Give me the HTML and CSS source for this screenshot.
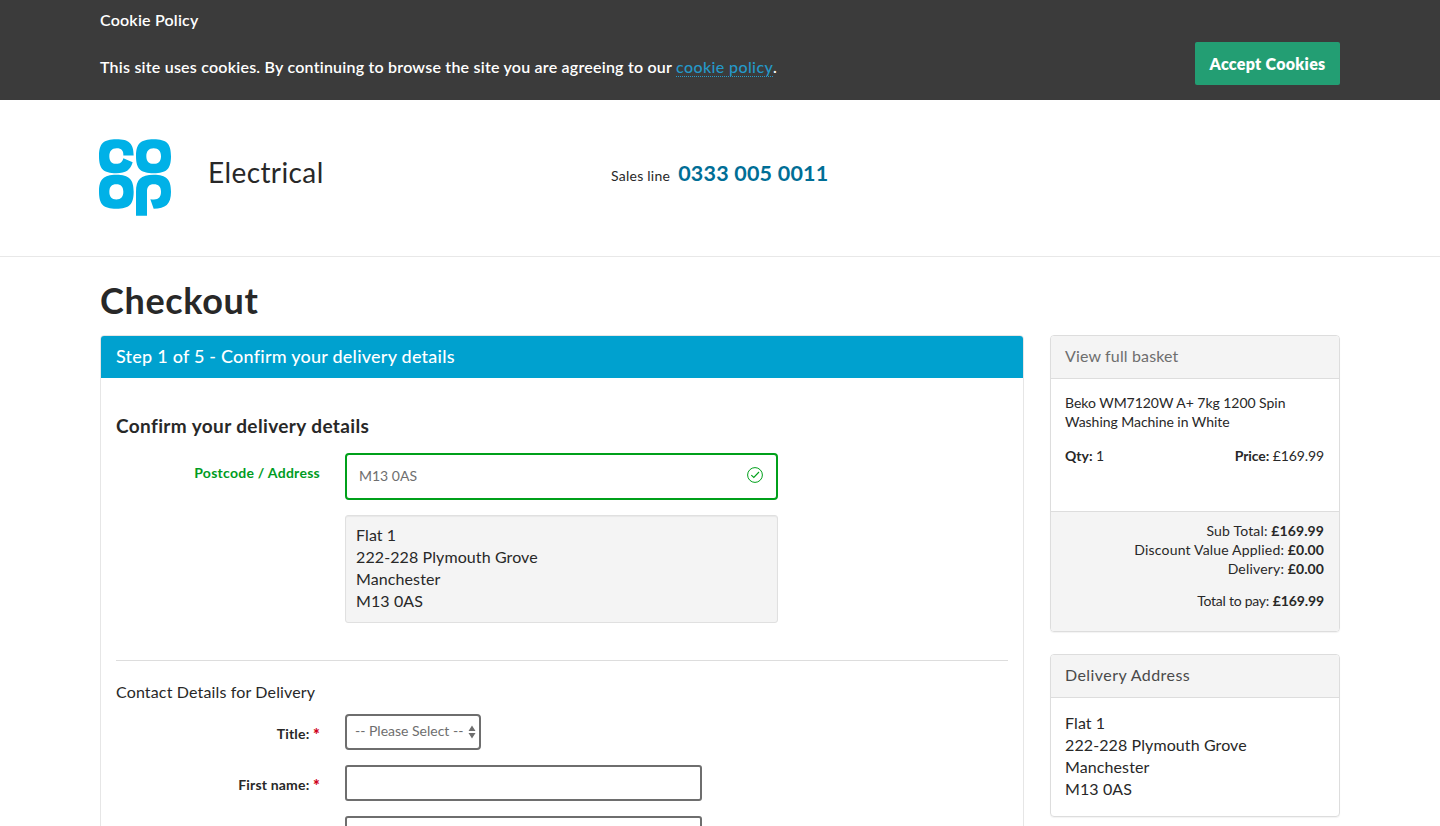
FILE: index.html
```html
<!DOCTYPE html>
<html lang="en">
<head>
<meta charset="utf-8">
<title>Checkout - Co-op Electrical</title>
<link rel="stylesheet" href="styles.css">
</head>
<body>
<section class="cookie-banner">
  <div class="container cookie-inner">
    <div class="cookie-text">
      <p class="cookie-title"><span>Cookie Policy</span></p>
      <p class="cookie-message">This site uses cookies. By continuing to browse the site you are agreeing to our <a href="#">cookie policy</a>.</p>
    </div>
    <button class="accept" type="button">Accept Cookies</button>
  </div>
</section>

<header class="site-header">
  <div class="container header-inner">
    <svg class="logo" viewBox="57 57 216 230" role="img" aria-label="Co-op">
      <g fill="#00b1e7" fill-rule="evenodd">
        <path d="M109 57C148 57 161 70 161 106H130C131 92 125 84 110 84C95 84 88 93 88 108C88 123 95 131 109 131C120 131 127 126 130 114L158 126C151 149 138 159 109 159C70 159 57 146 57 108C57 70 70 57 109 57Z"/>
        <path d="M221 57C260 57 273 70 273 108C273 146 260 159 221 159C182 159 168 146 168 108C168 70 182 57 221 57ZM221 84C206 84 199 93 199 108C199 123 206 131 221 131C236 131 243 123 243 108C243 93 236 84 221 84Z"/>
        <path d="M109 164C148 164 161 178 161 215C161 253 148 266 109 266C70 266 57 253 57 215C57 178 70 164 109 164ZM109 192C95 192 88 200 88 215C88 230 95 238 109 238C123 238 130 230 130 215C130 200 123 192 109 192Z"/>
        <path d="M221 164C260 164 273 178 273 215C273 253 257 265 221 266L211 237C234 242 243 232 243 215C243 200 236 192 221 192C207 192 201 200 201 214V287H168V215C168 178 182 164 221 164Z"/>
      </g>
    </svg>
    <div class="brand">Electrical</div>
    <div class="sales"><span class="sales-label">Sales line</span><span class="sales-number">0333 005 0011</span></div>
  </div>
</header>

<main class="container">
  <h1><span>Checkout</span></h1>
  <div class="columns">
    <section class="panel">
      <h2 class="panel-heading"><span>Step 1 of 5 - Confirm your delivery details</span></h2>
      <form class="panel-body">
        <h3 class="section-title"><span>Confirm your delivery details</span></h3>
        <div class="row postcode-row">
          <label class="label valid"><span>Postcode / Address</span></label>
          <div class="postcode">
            <div class="postcode-input">
              <span class="postcode-value">M13 0AS</span>
              <svg class="tick" viewBox="0 0 16 16" fill="none" stroke="#00a01a"><circle cx="8" cy="8" r="7.4"/><path d="M4.3 8.2L6.8 10.5L12 5" stroke-width="1.1"/></svg>
            </div>
            <address class="well">Flat 1<br><span>222-228 Plymouth Grove</span><br>Manchester<br>M13 0AS</address>
          </div>
        </div>
        <hr>
        <p class="contact-title"><span>Contact Details for Delivery</span></p>
        <div class="row field-row">
          <label class="label"><span>Title: <b class="req">*</b></span></label>
          <div class="select"><span>-- Please Select --</span>
            <svg class="arrows" viewBox="0 0 8 14" fill="#6e6e6e"><path d="M4 0.5L7.5 6H0.5ZM4 13.5L7.5 8H0.5Z"/></svg>
          </div>
        </div>
        <div class="row field-row">
          <label class="label"><span>First name: <b class="req">*</b></span></label>
          <input class="text-input" type="text">
        </div>
        <div class="row field-row">
          <label class="label"></label>
          <input class="text-input" type="text">
        </div>
      </form>
    </section>

    <aside class="sidebar">
      <section class="card">
        <div class="card-heading basket-heading"><span>View full basket</span></div>
        <div class="basket-body">
          <p class="product"><span>Beko WM7120W A+ 7kg 1200 Spin</span><br><span>Washing Machine in White</span></p>
          <div class="qty-row"><span><b>Qty:</b> 1</span><span class="price"><b>Price:</b> £169.99</span></div>
        </div>
        <div class="totals">
          <p><span>Sub Total:</span> <b>£169.99</b></p>
          <p><span>Discount Value Applied:</span> <b>£0.00</b></p>
          <p><span>Delivery:</span> <b>£0.00</b></p>
          <p class="total-pay"><span>Total to pay:</span> <b>£169.99</b></p>
        </div>
      </section>
      <section class="card">
        <div class="card-heading"><span>Delivery Address</span></div>
        <address class="card-address">Flat 1<br><span>222-228 Plymouth Grove</span><br>Manchester<br>M13 0AS</address>
      </section>
    </aside>
  </div>
</main>
</body>
</html>
```
FILE: styles.css
```css
* { box-sizing: border-box; }
html, body { margin: 0; height: 826px; overflow: hidden; }
body {
  background: #fff;
  color: #282828;
  font-family: Lato, "Open Sans", sans-serif;
  font-size: 16px;
  line-height: 22px;
}
h1, h2, h3, p { margin: 0; }
address { font-style: normal; letter-spacing: .1px; }
b { font-weight: 700; }
.container { width: 1240px; margin: 0 auto; }

.cookie-banner { background: #3b3b3b; color: #fff; height: 100px; font-weight: 600; }
.cookie-inner { display: flex; justify-content: space-between; align-items: flex-start; }
.cookie-text { padding-top: 8px; line-height: 24px; letter-spacing: .2px; }
.cookie-message { margin-top: 23px; letter-spacing: .22px; }
.cookie-message a { color: #2598c8; font-weight: 500; letter-spacing: .38px; text-decoration: none; border-bottom: 1px dotted #2598c8; }
.accept {
  width: 145px;
  height: 43px;
  margin-top: 42px;
  padding: 0;
  border: 0;
  border-radius: 2px;
  background: #239e73;
  color: #fff;
  font: 800 16px/22px Lato, sans-serif;
  letter-spacing: .3px;
}

.site-header { height: 157px; border-bottom: 1px solid #e8e8e8; }
.header-inner { display: flex; align-items: flex-start; }
.logo { width: 72px; height: 77px; margin: 39px 0 0 -1px; }
.brand { width: 403px; margin: 54px 0 0 37px; font-size: 28px; line-height: 36px; letter-spacing: .4px; }
.sales { display: flex; align-items: baseline; gap: 8px; margin-top: 58px; line-height: 30px; }
.sales-label { font-size: 14px; letter-spacing: .25px; }
.sales-number { color: #006e96; font-size: 21.5px; font-weight: 700; letter-spacing: .2px; }

h1 { height: 78px; padding-top: 20px; font-size: 36px; line-height: 46px; font-weight: 700; letter-spacing: .65px; }
.columns { display: flex; justify-content: space-between; align-items: flex-start; }
.panel { width: 924px; border: 1px solid #e6e6e6; border-radius: 4px; }
.panel-heading {
  height: 42px;
  padding: 9px 15px;
  border-radius: 3px 3px 0 0;
  background: #00a1cf;
  color: #fff;
  font-size: 18px;
  line-height: 22px;
  font-weight: 500;
  letter-spacing: .23px;
}
.panel-body { padding: 36px 15px 15px; }
.section-title { height: 39px; font-size: 19px; line-height: 24px; font-weight: 700; letter-spacing: .38px; }
.row { display: flex; align-items: flex-start; gap: 25px; }
.label { width: 204px; text-align: right; font-size: 14px; line-height: 20px; font-weight: 700; padding-top: 10px; letter-spacing: .18px; }
.valid { color: #009c1f; letter-spacing: .27px; }
.postcode { width: 433px; }
.postcode-input {
  display: flex;
  justify-content: space-between;
  align-items: center;
  height: 47px;
  padding: 0 13px 2px 12px;
  border: 2px solid #00a01a;
  border-radius: 4px;
  color: #6e6e6e;
  font-size: 14px;
}
.tick { width: 16px; height: 16px; margin-bottom: 2px; }
.well {
  height: 108px;
  margin-top: 15px;
  padding: 8px 10px;
  border: 1px solid #e0e0e0;
  border-radius: 3px;
  background: #f4f4f4;
  box-shadow: inset 0 1px 1px rgba(0, 0, 0, .05);
}
hr { height: 1px; margin: 37px 0 20px; border: 0; background: #ddd; }
.contact-title { height: 33px; letter-spacing: .15px; }
.field-row { height: 51px; }
.select {
  display: flex;
  justify-content: space-between;
  align-items: center;
  width: 136px;
  height: 36px;
  padding: 0 3px 0 8px;
  border: 2px solid #6e6e6e;
  border-radius: 4px;
  color: #6e6e6e;
  font-size: 14px;
}
.select span { padding-bottom: 3px; }
.arrows { width: 8px; height: 14px; }
.text-input { width: 357px; height: 36px; border: 2px solid #6e6e6e; border-radius: 3px; background: #fff; }
.req { color: #d0021b; font-size: 16px; line-height: 14px; font-weight: 900; vertical-align: -2px; }

.sidebar { display: flex; flex-direction: column; gap: 22px; width: 290px; }
.card { border: 1px solid #ddd; border-radius: 4px; box-shadow: 0 1px 1px rgba(0, 0, 0, .05); overflow: hidden; }
.card-heading { height: 43px; padding: 9px 14px; border-bottom: 1px solid #ddd; background: #f4f4f4; color: #4a4a4a; letter-spacing: .43px; }
.basket-heading { color: #6e6e6e; letter-spacing: .14px; }
.basket-body { height: 132px; padding: 14px 15px 0 14px; font-size: 14px; line-height: 19px; }
.product { letter-spacing: -.04px; }
.qty-row { display: flex; justify-content: space-between; margin-top: 15px; }
.price { letter-spacing: -.1px; }
.totals { height: 120px; padding: 9px 15px; border-top: 1px solid #ddd; background: #f4f4f4; text-align: right; font-size: 14px; line-height: 19px; }
.totals span { letter-spacing: .18px; }
.totals b { letter-spacing: .1px; }
.totals .total-pay { margin-top: 13px; }
.totals .total-pay span { letter-spacing: -.25px; }
.totals .total-pay b { letter-spacing: -.1px; }
.card-address { height: 118px; padding: 14px; }
```
